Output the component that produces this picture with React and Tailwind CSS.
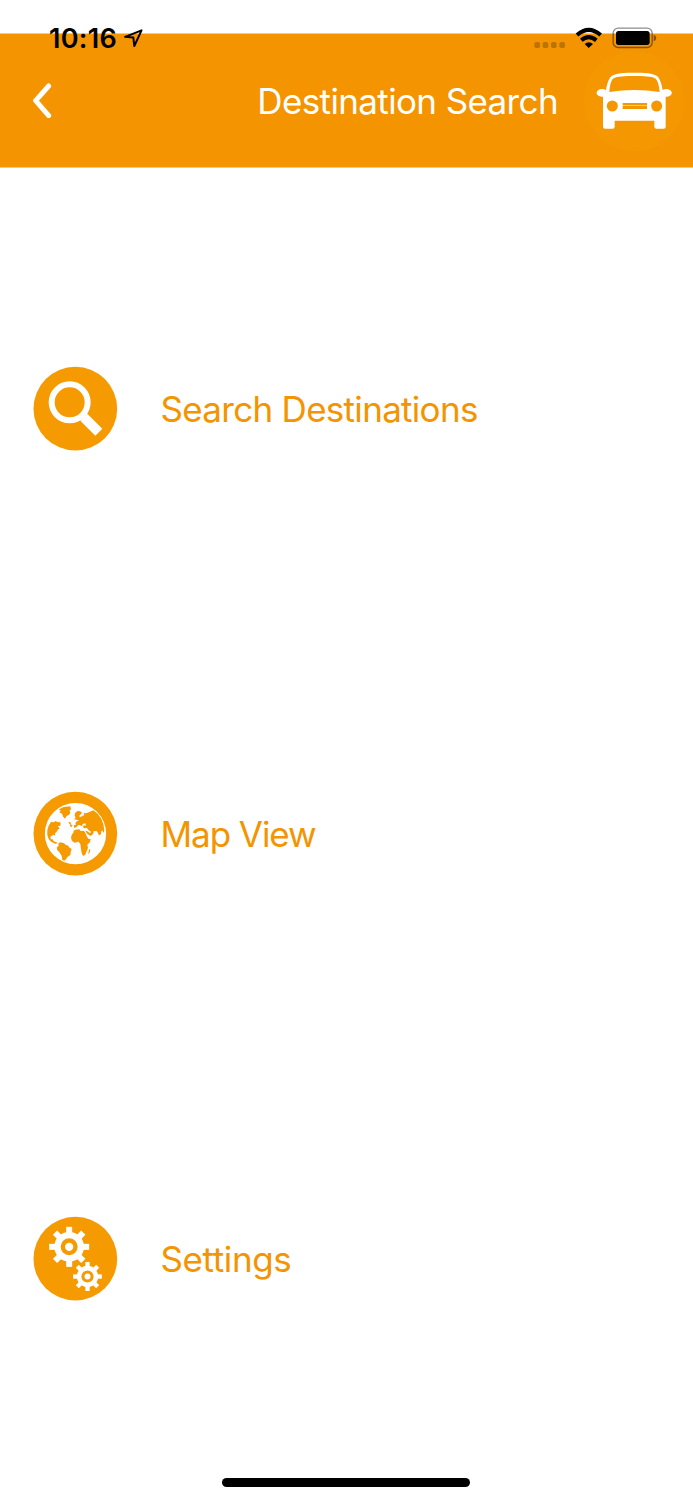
const CarIcon = () => (
  <svg viewBox="249 147 306 309" className="h-[103px] w-[102px]" aria-hidden="true">
    <circle cx="402" cy="304" r="151" fill="#f49700" />
    <path
      fill="#fff"
      fillRule="evenodd"
      d="M318 270 C322 250 326 237 334 229 C345 219 375 218 403 218 C431 218 461 219 472 229 C480 237 484 250 488 270 C494 266 502 266 508 269 C514 272 517 277 515 281 C513 287 505 291 497 290 V380 Q497 386 491 386 H469 Q463 386 463 380 V362 H344 V380 Q344 386 338 386 H315 Q309 386 309 380 V290 C301 291 293 287 290 281 C288 277 293 271 299 268 C305 266 312 266 318 270 Z M328 276 Q365 270 403 270 Q441 270 479 276 C477 256 473 240 465 235 C457 229 430 228 403 228 C376 228 350 229 341 235 C333 240 330 256 328 276 Z"
    />
    <circle cx="337" cy="318" r="16.500" fill="#f49700" />
    <circle cx="470" cy="318" r="16.500" fill="#f49700" />
    <path fill="#f49700" d="M368 309h73v7.500h-73zM368 318h73v9h-73z" />
  </svg>
);

const SearchIcon = () => (
  <>
    <circle cx="134" cy="142" r="54" fill="none" stroke="#fff" strokeWidth="18" />
    <path d="M166 197 L187 176 L232 221 L211 242 Z" fill="#fff" />
  </>
);

const GlobeIcon = () => (
  <>
    <circle cx="151.500" cy="161" r="92" fill="#fff" />
    <g fill="#f59a00">
      <path d="M102 88 L116 81 L136 79 L138 87 L134 92 L136 99 L131 105 L125 108 L120 116 L115 111 L111 101 L103 97 L107 92 Z" />
      <path d="M78 126 L87 127 L92 123 L98 127 L103 125 L107 130 L106 137 L98 139 L104 144 L98 150 L95 155 L90 160 L91 168 L87 164 L80 167 L76 171 L78 178 L83 178 L86 184 L95 187 L97 190 L91 191 L81 187 L76 183 L71 177 L67 165 L67 151 L71 137 Z" />
      <path d="M100 190 L107 187 L117 190 L122 194 L130 197 L132 202 L140 207 L137 217 L136 225 L128 230 L123 238 L118 242 L112 240 L110 227 L103 217 L96 209 L96 202 L101 197 Z" />
      <path d="M147 118 L152 113 L149 107 L150 99 L158 93 L166 94 L171 99 L166 104 L162 109 L167 111 L178 105 L176 98 L183 100 L193 96 L205 91 L218 101 L229 116 L235 133 L238 151 L236 159 L232 151 L229 154 L228 163 L222 166 L216 154 L206 153 L205 161 L197 168 L187 162 L181 152 L186 153 L195 160 L198 155 L190 150 L186 144 L179 145 L173 141 L177 136 L183 137 L181 130 L173 132 L171 139 L164 135 L159 136 L154 142 L147 143 L147 135 L153 134 L151 129 L156 124 L162 121 L154 119 Z" />
      <path d="M130 127 L136 126 L139 134 L143 137 L139 141 L135 139 L136 134 Z" />
      <path d="M146 152 L151 149 L163 148 L167 153 L176 152 L180 157 L186 170 L190 176 L197 177 L195 186 L187 194 L189 204 L184 215 L181 224 L174 228 L170 219 L168 207 L166 193 L161 185 L148 188 L141 182 L138 174 L140 164 L145 158 Z" />
      <path d="M191 213 L194 206 L196 210 L193 220 L190 222 Z" />
    </g>
  </>
);

const teeth = [0, 45, 90, 135, 180, 225, 270, 315];

const Gear = ({ cx, cy, scale }) => (
  <g transform={`translate(${cx} ${cy}) scale(${scale})`}>
    {teeth.map((angle) => (
      <rect key={angle} x="-9" y="-60" width="18" height="24" fill="#fff" transform={`rotate(${angle})`} />
    ))}
    <circle r="35" fill="none" stroke="#fff" strokeWidth="19" />
    <circle r="12.500" fill="#fff" />
  </g>
);

const SettingsIcon = () => (
  <>
    <Gear cx="132.500" cy="125.500" scale="1" />
    <Gear cx="187.500" cy="214.500" scale="0.720" />
  </>
);

const menuItems = [
  { label: 'Search Destinations', Icon: SearchIcon, spacing: 'tracking-[-0.7px]' },
  { label: 'Map View', Icon: GlobeIcon, spacing: 'tracking-[-1.05px]' },
  { label: 'Settings', Icon: SettingsIcon, spacing: 'tracking-[-0.4px]' }
];

const StatusBar = () => (
  <div className="absolute inset-x-0 top-0 flex h-[76px] justify-between pr-[35px] pl-[49px] text-black">
    <div className="flex items-start gap-[7px] pt-[23px]">
      <span className="text-[27px] leading-8 font-semibold tracking-[0.3px]">10:16</span>
      <svg viewBox="371 86 57 55" className="mt-[6px] h-[18px] w-[19px]" aria-hidden="true">
        <path d="M374 110 L424 90 L402 138 L399 112 Z" fill="none" stroke="#000" strokeWidth="6" strokeLinejoin="round" />
      </svg>
    </div>
    <svg viewBox="99 78 375 72" className="mt-[26px] h-[24px] w-[125px]" aria-hidden="true">
      <g fill="#000" fillOpacity="0.220">
        <rect x="103" y="126" width="17" height="18" rx="5" />
        <rect x="128" y="126" width="17" height="18" rx="5" />
        <rect x="153" y="126" width="17" height="18" rx="5" />
        <rect x="178" y="126" width="17" height="18" rx="5" />
      </g>
      <g fill="none" stroke="#000" strokeWidth="12">
        <path d="M231 105 Q266 74 302 105" />
        <path d="M244 121 Q266 102 289 121" />
      </g>
      <path d="M254 132 Q266 121 279 132 L266 144 Z" />
      <rect x="339.500" y="84.500" width="117" height="58" rx="15" fill="none" stroke="#000" strokeOpacity="0.450" strokeWidth="4" />
      <rect x="348" y="93" width="101" height="42" rx="8" />
      <path d="M461 104 Q469 107 469 114 Q469 121 461 124 Z" fillOpacity="0.450" />
    </svg>
  </div>
);

export default function App() {
  return (
    <div className="relative flex h-[1500px] w-full flex-col bg-white font-[Inter,sans-serif]">
      <header className="mt-[33px] flex h-[135px] items-center border-y border-[#f9c980] bg-[#f39400] bg-clip-padding pr-[8px] pl-[33px] text-white">
        <button type="button" aria-label="Back">
          <svg viewBox="99 249 57 105" className="h-[35px] w-[19px]">
            <path
              d="M146 258 L107 302 L146 347"
              fill="none"
              stroke="#fff"
              strokeWidth="15"
              strokeLinecap="round"
              strokeLinejoin="round"
            />
          </svg>
        </button>
        <h1 className="ml-auto pt-[2px] pr-[25px] text-[35px] leading-none font-normal tracking-[-0.63px]">Destination Search</h1>
        <CarIcon />
      </header>

      <nav className="mt-[28px] flex h-[1275px] flex-col">
        {menuItems.map(({ label, Icon, spacing }) => (
          <a key={label} className="flex flex-1 items-center gap-[42.500px] pl-[33px]">
            <svg viewBox="24 33 255 255" className="h-[85px] w-[85px]" aria-hidden="true">
              <circle cx="151" cy="161" r="125.500" fill="#f59a00" />
              <Icon />
            </svg>
            <span className={`pt-[2px] text-[35px] leading-none text-[#f39400] ${spacing}`}>{label}</span>
          </a>
        ))}
      </nav>

      <StatusBar />
      <div className="absolute bottom-[13.500px] left-[222px] h-[8.500px] w-[248px] rounded-full bg-black" />
    </div>
  );
}
